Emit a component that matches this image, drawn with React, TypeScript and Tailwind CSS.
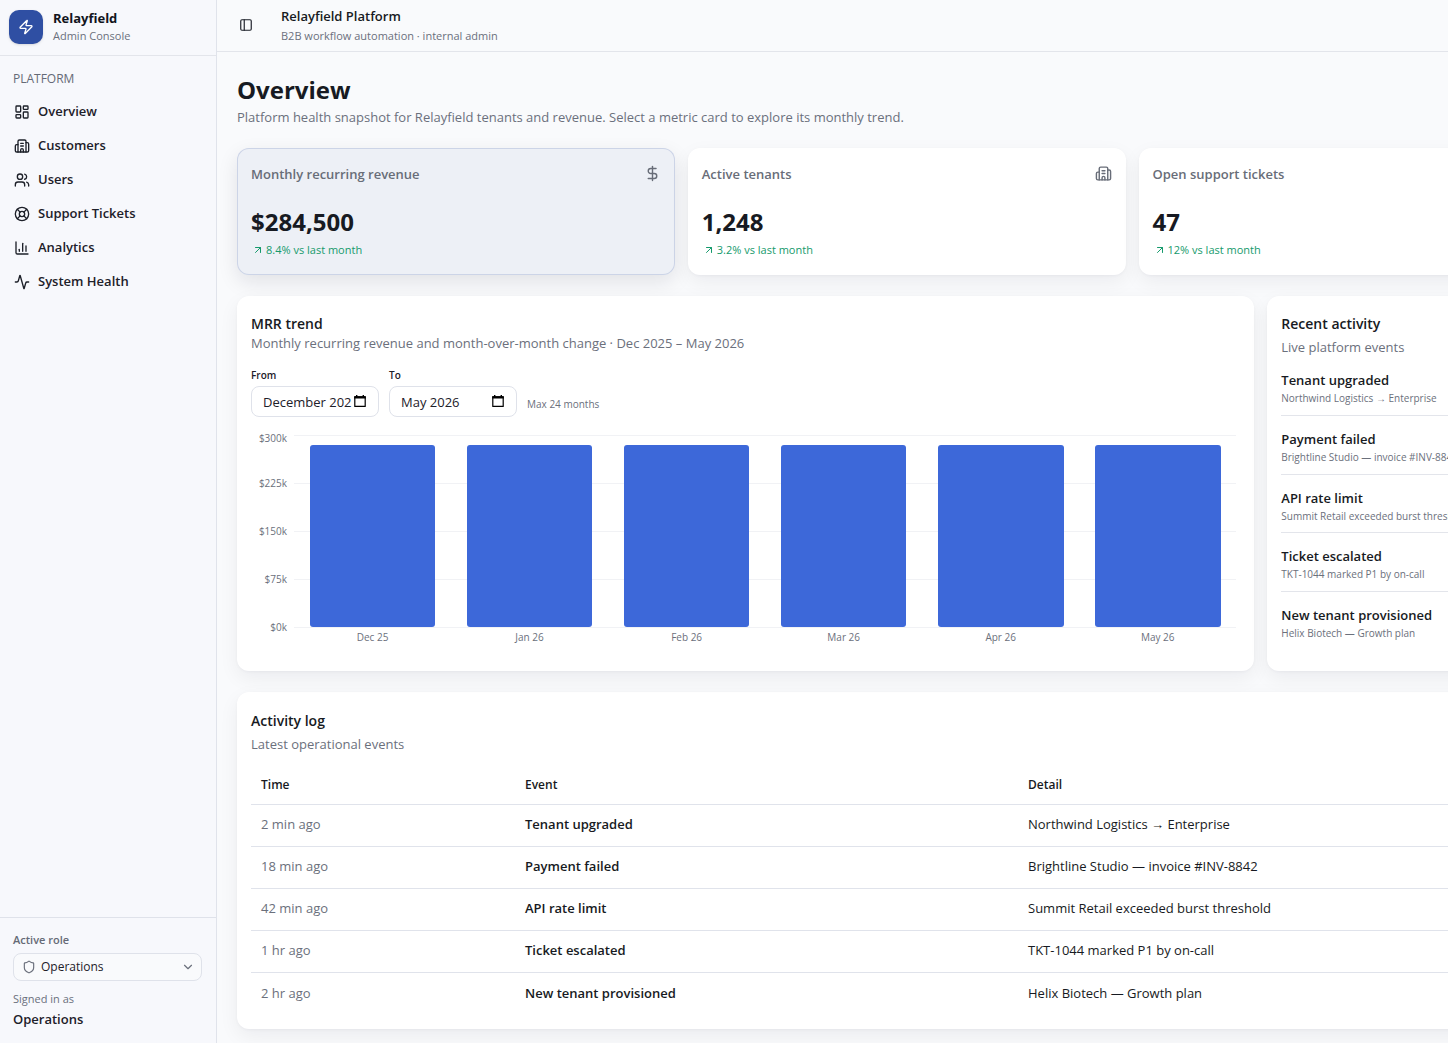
import {
  Activity,
  ArrowUpRight,
  Building2,
  ChartColumn,
  ChevronDown,
  DollarSign,
  LayoutDashboard,
  LifeBuoy,
  PanelLeft,
  Shield,
  Users,
  Zap,
  type LucideIcon,
} from "lucide-react";
import type { ReactNode } from "react";

const nav: { label: string; icon: LucideIcon }[] = [
  { label: "Overview", icon: LayoutDashboard },
  { label: "Customers", icon: Building2 },
  { label: "Users", icon: Users },
  { label: "Support Tickets", icon: LifeBuoy },
  { label: "Analytics", icon: ChartColumn },
  { label: "System Health", icon: Activity },
];

const metrics: { title: string; value: string; delta: string; icon?: LucideIcon }[] = [
  { title: "Monthly recurring revenue", value: "$284,500", delta: "8.4% vs last month", icon: DollarSign },
  { title: "Active tenants", value: "1,248", delta: "3.2% vs last month", icon: Building2 },
  { title: "Open support tickets", value: "47", delta: "12% vs last month" },
];

const mrr = [
  { month: "Dec 25", value: 284.2 },
  { month: "Jan 26", value: 284.5 },
  { month: "Feb 26", value: 284.5 },
  { month: "Mar 26", value: 284.5 },
  { month: "Apr 26", value: 284.5 },
  { month: "May 26", value: 284.5 },
];

const ticks = ["$300k", "$225k", "$150k", "$75k", "$0k"];

const events = [
  { time: "2 min ago", event: "Tenant upgraded", detail: "Northwind Logistics → Enterprise" },
  { time: "18 min ago", event: "Payment failed", detail: "Brightline Studio — invoice #INV-8842" },
  { time: "42 min ago", event: "API rate limit", detail: "Summit Retail exceeded burst threshold" },
  { time: "1 hr ago", event: "Ticket escalated", detail: "TKT-1044 marked P1 by on-call" },
  { time: "2 hr ago", event: "New tenant provisioned", detail: "Helix Biotech — Growth plan" },
];

function Card({ className, children }: { className: string; children: ReactNode }) {
  return (
    <section
      className={`rounded-xl bg-white px-3.5 shadow-[0_1px_3px_rgba(15,23,42,0.04),0_7px_20px_rgba(15,23,42,0.06)] ${className}`}
    >
      {children}
    </section>
  );
}

function Sidebar() {
  return (
    <aside className="sticky top-0 flex h-screen w-[217px] shrink-0 flex-col border-r border-[#e0e3eb] bg-[#f7f8fc]">
      <div className="flex h-14 items-center gap-2.5 border-b border-[#e3e5eb] px-[9px] pb-0.5">
        <div className="flex size-[34px] items-center justify-center rounded-[10px] bg-[#2f4fa3] text-white shadow-sm">
          <Zap className="size-4" />
        </div>
        <div>
          <p className="text-[13px] leading-[18px] font-bold text-[#12151d]">Relayfield</p>
          <p className="text-[11px] leading-[18px] text-[#6b707c]">Admin Console</p>
        </div>
      </div>

      <nav className="flex flex-1 flex-col pt-3">
        <h2 className="px-[13px] pb-1.5 text-xs leading-[21px] font-medium text-[#656a76]">PLATFORM</h2>
        {nav.map(({ label, icon: Icon }) => (
          <a key={label} href="#" className="flex h-[34px] items-center gap-2 px-3.5 text-[13px] font-semibold text-[#1d2029]">
            <Icon className="size-4" />
            {label}
          </a>
        ))}
      </nav>

      <div className="border-t border-[#dfe2ea] px-[13px] pt-3 pb-3.5">
        <label htmlFor="role" className="block text-[11px] leading-5 font-semibold text-[#656a76]">
          Active role
        </label>
        <div className="relative mt-[3px] mb-2">
          <Shield className="absolute top-[7px] left-[9px] size-3.5 text-[#6b707c]" />
          <select
            id="role"
            className="block h-7 w-full max-w-[189px] appearance-none rounded-lg border border-[#dfe2ea] bg-[#f9fafc] pl-[27px] text-xs text-[#1d2029]"
          >
            <option>Operations</option>
          </select>
          <ChevronDown className="pointer-events-none absolute top-[7px] right-2 size-3.5 text-[#6b707c]" />
        </div>
        <p className="text-[11px] leading-5 text-[#6b707c]">Signed in as</p>
        <p className="text-[13px] leading-5 font-semibold text-[#1d2029]">Operations</p>
      </div>
    </aside>
  );
}

function TrendChart() {
  return (
    <div className="mt-[18px] mr-1 flex">
      <div className="flex h-48 w-[43px] flex-col justify-between pr-[7px] text-right text-[10px] leading-[0px] text-[#6b707c]">
        {ticks.map((t) => (
          <span key={t} className="first:-mb-[3px] first:pt-[3px]">
            {t}
          </span>
        ))}
      </div>
      <div className="flex-1">
        <div className="relative h-48">
          <div className="absolute inset-0 flex flex-col justify-between">
            {ticks.map((t) => (
              <div key={t} className="-mb-px h-px bg-[#f1f2f5]" />
            ))}
          </div>
          <div className="relative flex h-full items-end">
            {mrr.map((m) => (
              <div key={m.month} className="flex h-full flex-1 items-end justify-center">
                <div className="w-4/5 rounded-[3px] bg-[#3d68d9]" style={{ height: `${(m.value / 300) * 100}%` }} />
              </div>
            ))}
          </div>
        </div>
        <div className="flex text-center text-[10px] leading-5 text-[#6b707c]">
          {mrr.map((m) => (
            <span key={m.month} className="flex-1">
              {m.month}
            </span>
          ))}
        </div>
      </div>
    </div>
  );
}

function CalendarIcon() {
  return (
    <svg className="pointer-events-none absolute top-2 right-3 size-3.5" viewBox="0 0 14 14" fill="none">
      <path d="M1.8 2.8h10.4v9.6H1.8z" stroke="#000" strokeWidth="1.2" strokeLinejoin="round" />
      <path d="M1.2 2.2h11.6v2.4H1.2zM3 1h1.4v1.4H3zM9.6 1H11v1.4H9.6z" fill="#000" />
    </svg>
  );
}

function MonthField({ id, label, value }: { id: string; label: string; value: string }) {
  return (
    <div>
      <label htmlFor={id} className="block text-[10px] leading-4 font-semibold text-[#1d2029]">
        {label}
      </label>
      <div className="relative mt-[3px]">
        <input
          id={id}
          type="text"
          defaultValue={value}
          className="block h-[31px] w-32 rounded-lg border border-[#dfe2ea] bg-white pr-[26px] pl-[11px] text-[13px] text-[#1d2029]"
        />
        <CalendarIcon />
      </div>
    </div>
  );
}

export default function App() {
  return (
    <div className="flex min-h-screen bg-[#f9fafc] font-['Open_Sans','Noto_Sans',sans-serif] text-[#171a22]">
      <Sidebar />

      <div className="min-w-0 flex-1 overflow-hidden">
        <header className="flex h-[52px] items-center border-b border-[#e3e5eb] px-[22px]">
          <button type="button" aria-label="Toggle sidebar" className="mr-7 pb-0.5 text-[#1d2029]">
            <PanelLeft className="size-3.5" />
          </button>
          <div>
            <p className="text-[13px] leading-[19px] font-semibold">Relayfield Platform</p>
            <p className="text-[11px] leading-[19px] text-[#6b707c]">B2B workflow automation · internal admin</p>
          </div>
        </header>

        <main className="min-w-[1830px] px-5 pt-[22px] pb-3.5">
          <h1 className="text-2xl leading-8 font-bold">Overview</h1>
          <p className="text-[13px] leading-[22px] text-[#6b707c]">
            Platform health snapshot for Relayfield tenants and revenue. Select a metric card to explore its monthly trend.
          </p>

          {/* Metric cards */}
          <div className="mt-5 grid grid-cols-4 gap-[13px]">
            {metrics.map(({ title, value, delta, icon: Icon }, i) => (
              <button
                key={title}
                type="button"
                className={`h-[127px] rounded-xl px-3.5 text-left ${
                  i === 0
                    ? "bg-[#edf0f6] shadow-[0_7px_20px_rgba(15,23,42,0.1)] ring-1 ring-[#ccd4e7] ring-inset"
                    : "bg-white shadow-[0_1px_3px_rgba(15,23,42,0.04),0_7px_20px_rgba(15,23,42,0.06)]"
                }`}
              >
                <span className="flex items-center justify-between text-[13px] leading-5 font-semibold text-[#686d78]">
                  {title}
                  {Icon && <Icon className="size-[17px]" />}
                </span>
                <span className="mt-5 block text-2xl leading-9 font-bold">{value}</span>
                <span className="flex items-center gap-0.5 pl-px text-[11px] leading-5 text-[#159a6c]">
                  <ArrowUpRight className="size-3" />
                  {delta}
                </span>
              </button>
            ))}
          </div>

          <div className="mt-[21px] grid grid-cols-7 gap-[13px]">
            <Card className="col-span-4 pt-[18px] pb-6">
              <h2 className="text-sm leading-5 font-semibold">MRR trend</h2>
              <p className="text-[13px] leading-[19px] text-[#6b707c]">
                Monthly recurring revenue and month-over-month change · Dec 2025 – May 2026
              </p>
              <div className="mt-3.5 flex items-end gap-2.5">
                <MonthField id="from" label="From" value="December 2025" />
                <MonthField id="to" label="To" value="May 2026" />
                <p className="pb-[5px] text-[10px] leading-4 text-[#6b707c]">Max 24 months</p>
              </div>
              <TrendChart />
            </Card>

            <Card className="col-span-3 pt-[18px]">
              <h2 className="text-sm leading-5 font-semibold">Recent activity</h2>
              <p className="mt-[3px] text-[13px] leading-5 text-[#6b707c]">Live platform events</p>
              <ul className="grid h-[294px] grid-rows-5">
                {events.map((e) => (
                  <li key={e.event} className="border-b border-[#e3e5eb] pt-3.5 last:border-b-0">
                    <p className="text-[13px] leading-[18px] font-semibold">{e.event}</p>
                    <p className="text-[10px] leading-[18px] text-[#6b707c]">{e.detail}</p>
                  </li>
                ))}
              </ul>
            </Card>
          </div>

          <Card className="mt-[21px] pt-[19px] pb-[15px]">
            <h2 className="text-sm leading-5 font-semibold">Activity log</h2>
            <p className="mt-[3px] text-[13px] leading-5 text-[#6b707c]">Latest operational events</p>
            <table className="mt-3 w-full table-fixed text-left text-[13px]">
              <thead>
                <tr className="h-[38px] border-b border-[#e0e3eb] text-xs">
                  <th className="w-[264px] px-2.5 font-semibold">Time</th>
                  <th className="w-[503px] px-2.5 font-semibold">Event</th>
                  <th className="px-2.5 font-semibold">Detail</th>
                </tr>
              </thead>
              <tbody>
                {events.map((e) => (
                  <tr key={e.event} className="h-[42px] border-b border-[#e0e3eb] last:border-b-0">
                    <td className="px-2.5 text-[#6b707c]">{e.time}</td>
                    <td className="px-2.5 font-semibold">{e.event}</td>
                    <td className="px-2.5">{e.detail}</td>
                  </tr>
                ))}
              </tbody>
            </table>
          </Card>
        </main>
      </div>
    </div>
  );
}
